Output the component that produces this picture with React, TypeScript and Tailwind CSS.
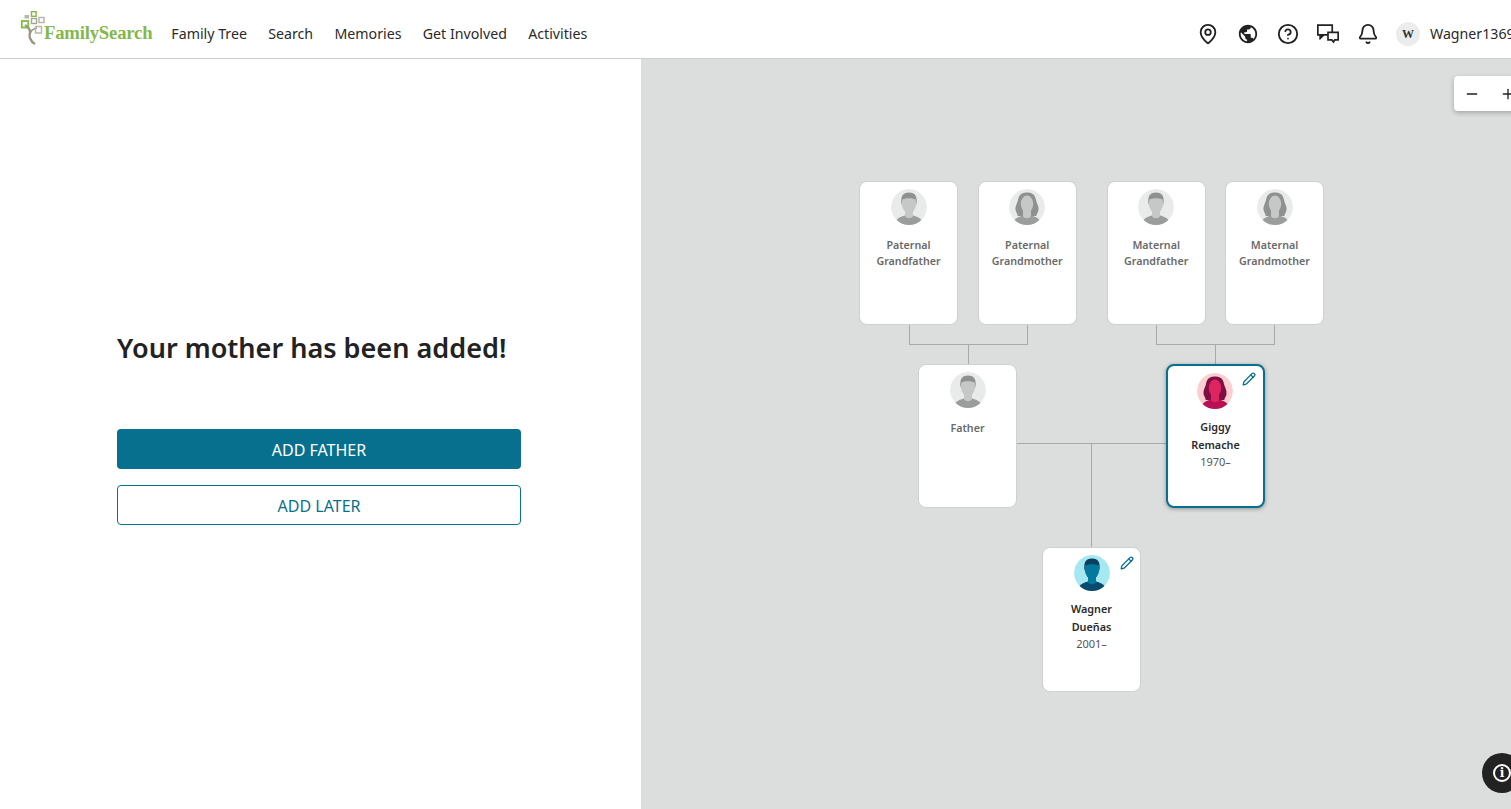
import { Bell, CircleHelp, MapPin, Minus, Pencil, Plus } from "lucide-react";
import { MdPublic } from "react-icons/md";

type Sex = "male" | "female";

const placeholders = [
  { pos: "left-[218px] top-[122px]", sex: "male", lines: ["Paternal", "Grandfather"] },
  { pos: "left-[336.7px] top-[122px]", sex: "female", lines: ["Paternal", "Grandmother"] },
  { pos: "left-[465.7px] top-[122px]", sex: "male", lines: ["Maternal", "Grandfather"] },
  { pos: "left-[584px] top-[122px]", sex: "female", lines: ["Maternal", "Grandmother"] },
  { pos: "left-[277px] top-[305px]", sex: "male", lines: ["Father"] },
] as const;

const connectors = [
  "left-[268px] top-[266px] h-[20px] w-px",
  "left-[386px] top-[266px] h-[20px] w-px",
  "left-[268px] top-[285px] h-px w-[119px]",
  "left-[327px] top-[285px] h-[20px] w-px",
  "left-[515px] top-[266px] h-[20px] w-px",
  "left-[633px] top-[266px] h-[20px] w-px",
  "left-[515px] top-[285px] h-px w-[119px]",
  "left-[574px] top-[285px] h-[20px] w-px",
  "left-[376px] top-[384px] h-px w-[149px]",
  "left-[450px] top-[384px] h-[104px] w-px",
];

function Logo() {
  return (
    <svg width="26" height="36" viewBox="0 0 26 36" fill="none" className="shrink-0">
      <path d="M15 33 C10 30 9 25 10 21 C10 18 8 16 5 14" stroke="#9b9686" strokeWidth="2.4" />
      <path d="M10 23 C11 19 13 18 17 17" stroke="#9b9686" strokeWidth="1.6" />
      <rect x="11.5" y="0.7" width="4.6" height="4.6" stroke="#84b847" strokeWidth="1.4" />
      <rect x="4.5" y="4" width="4.5" height="3.5" fill="#b9b7ad" />
      <rect x="11.5" y="7.5" width="5" height="5" stroke="#a5a297" strokeWidth="1.4" />
      <rect x="19" y="6.5" width="5" height="5" stroke="#b9b7ad" strokeWidth="1.5" />
      <rect x="1.8" y="10" width="6.5" height="6.5" stroke="#84b847" strokeWidth="1.8" />
      <rect x="15.5" y="15.5" width="6" height="6.5" stroke="#b9b7ad" strokeWidth="1.5" />
    </svg>
  );
}

function ChatIcon() {
  return (
    <svg width="26" height="24" viewBox="0 0 26 24" fill="none" stroke="#222" strokeWidth="2">
      <path d="M1 1.5 H18 V13 H8 L4 17 V13 H1 Z" fill="#fff" />
      <path d="M4 13 L4 16 L7 13 Z" fill="#222" />
      <path d="M13 10 H25 V19 H21 L19.5 21.5 L17.5 19 H13 Z" fill="#fff" />
    </svg>
  );
}

function Avatar({ sex, tone = "gray" }: { sex: Sex; tone?: "gray" | "blue" | "pink" }) {
  const palette = {
    gray: { bg: "#e9ebea", hair: "#8f9191", skin: "#c6c8c8", body: "#9b9d9d" },
    blue: { bg: "#a5e8f2", hair: "#0a3f5e", skin: "#05799c", body: "#0a4a6c" },
    pink: { bg: "#fbcfd0", hair: "#7e0f45", skin: "#e0245f", body: "#b90f55" },
  }[tone];
  return (
    <svg width="36" height="36" viewBox="0 0 36 36" className="block rounded-full">
      <circle cx="18" cy="18" r="18" fill={palette.bg} />
      {sex === "female" && (
        <path
          d="M18 3.5 C12 3 9.5 7 9 11 C8.5 14 6 17 6.5 20.5 C7 24 9 25 8.5 27 L27.5 27 C27 25 29.5 24 29.5 20.5 C30 17 27.5 14 27 11 C26.5 7 24 3 18 3.5 Z"
          fill={palette.hair}
        />
      )}
      <path d="M4 36 C4 30 8 28.5 13.5 26.5 H22.5 C28 28.5 32 30 32 36 Z" fill={palette.body} />
      <path d="M14 20 H22 V26.5 C22 30 14 30 14 26.5 Z" fill={palette.skin} />
      {sex === "male" ? (
        <ellipse cx="18" cy="14.5" rx="7.2" ry="9.5" fill={palette.skin} />
      ) : (
        <ellipse cx="18" cy="15" rx="6.2" ry="8.5" fill={palette.skin} />
      )}
      {sex === "male" && (
        <path
          d="M10.5 16 C9.5 7.5 11.5 3.5 18 3.5 C24.5 3.5 26.5 7.5 25.5 16 L24.5 10.5 C21 8.8 15 8.8 11.5 10.5 Z"
          fill={palette.hair}
        />
      )}
    </svg>
  );
}

function PersonCard({
  pos,
  name,
  years,
  sex,
  tone,
  selected,
}: {
  pos: string;
  name: string[];
  years: string;
  sex: Sex;
  tone: "blue" | "pink";
  selected?: boolean;
}) {
  return (
    <div
      className={`absolute ${pos} w-[99px] rounded-lg bg-white pt-[7px] text-center ${
        selected
          ? "h-[144px] border-2 border-[#07708f] shadow-[0_1px_4px_rgba(0,0,0,0.35)]"
          : "h-[145px] border border-[#cfd1d0]"
      }`}
    >
      <div className={`flex justify-center ${selected ? "pr-[2px]" : ""}`}>
        <Avatar sex={sex} tone={tone} />
      </div>
      <Pencil
        size={14}
        strokeWidth={2.2}
        className={`absolute text-[#07708f] ${selected ? "right-[7px] top-[6px]" : "right-[6px] top-[8px]"}`}
      />
      <div className="mt-[9px] text-[10.8px] font-semibold leading-[18px] text-[#2b2b2b]">
        {name.map((line) => (
          <div key={line}>{line}</div>
        ))}
      </div>
      <div className="text-[11px] leading-[16px] text-[#555]">{years}</div>
    </div>
  );
}

export default function App() {
  return (
    <div className="flex h-[809px] w-[1511px] flex-col overflow-hidden bg-white font-['Noto_Sans',sans-serif]">
      <header className="flex h-[59px] shrink-0 items-center border-b border-[#cdcfce] bg-white">
        <div className="flex w-[1197px] shrink-0 items-center pl-[20px]">
          <div className="flex items-end">
            <Logo />
            <span className="-ml-[2px] mb-[4px] font-['Liberation_Serif',serif] text-[18.7px] font-bold leading-[20px] tracking-[-0.2px] text-[#85b84a]">
              FamilySearch
            </span>
          </div>
          <nav className="ml-[19px] flex gap-[21.3px] pt-[10px] text-[14.2px] leading-[20px] text-[#2a2a2a]">
            <span>Family Tree</span>
            <span>Search</span>
            <span>Memories</span>
            <span>Get Involved</span>
            <span>Activities</span>
          </nav>
        </div>
        <div className="flex shrink-0 items-center pt-[9px] text-[#222]">
          <div className="flex w-[22px] justify-center">
            <MapPin size={22} strokeWidth={2} />
          </div>
          <div className="ml-[18px] flex w-[22px] justify-center">
            <MdPublic size={24} />
          </div>
          <div className="ml-[18px] flex w-[22px] justify-center">
            <CircleHelp size={22} strokeWidth={2} />
          </div>
          <div className="ml-[18px] flex w-[22px] justify-center">
            <ChatIcon />
          </div>
          <div className="ml-[18px] flex w-[22px] justify-center">
            <Bell size={22} strokeWidth={2} />
          </div>
          <div className="ml-[17px] flex h-[24px] w-[24px] items-center justify-center rounded-full bg-[#ebeded] font-['Liberation_Serif',serif] text-[12px] font-bold text-[#333]">
            W
          </div>
          <span className="ml-[10px] whitespace-nowrap text-[14.2px] leading-[20px] text-[#2a2a2a]">
            Wagner1369
          </span>
        </div>
      </header>

      <main className="flex min-h-0 flex-1">
        <section className="w-[641px] shrink-0 bg-white pl-[117px] pt-[268px]">
          <h1 className="text-[27.05px] font-semibold leading-[42px] text-[#222]">
            Your mother has been added!
          </h1>
          <div className="mt-[60px] flex w-[404px] flex-col gap-[16px]">
            <button className="h-[40px] rounded-[4px] bg-[#07708f] pt-[2px] text-[16px] text-white">
              ADD FATHER
            </button>
            <button className="h-[40px] rounded-[4px] border border-[#07708f] bg-white pt-[2px] text-[16px] text-[#07708f]">
              ADD LATER
            </button>
          </div>
        </section>

        <section className="relative flex-1 overflow-hidden bg-[#dcdedd]">
          {connectors.map((c) => (
            <div key={c} className={`absolute ${c} bg-[#a8aaaa]`} />
          ))}

          {placeholders.map((p) => (
            <div
              key={p.pos}
              className={`absolute ${p.pos} h-[144px] w-[99px] rounded-lg border border-[#cfd1d0] bg-white pt-[7px] text-center`}
            >
              <div className="flex justify-center">
                <Avatar sex={p.sex} />
              </div>
              <div className="mt-[12px] text-[10.7px] font-semibold leading-[16px] text-[#6a6a6a]">
                {p.lines.map((line) => (
                  <div key={line}>{line}</div>
                ))}
              </div>
            </div>
          ))}

          <PersonCard
            pos="left-[525px] top-[305px]"
            name={["Giggy", "Remache"]}
            years="1970–"
            sex="female"
            tone="pink"
            selected
          />
          <PersonCard
            pos="left-[401px] top-[488px]"
            name={["Wagner", "Dueñas"]}
            years="2001–"
            sex="male"
            tone="blue"
          />

          <div className="absolute left-[813px] top-[17px] flex h-[35px] w-[100px] items-center gap-[20px] rounded-[4px] bg-white pl-[10px] text-[#222] shadow-[0_2px_5px_rgba(0,0,0,0.25)]">
            <Minus size={16} strokeWidth={2} />
            <Plus size={16} strokeWidth={2} />
          </div>

          <div className="absolute left-[841px] top-[694px] flex h-[40px] w-[40px] items-center justify-center rounded-full bg-[#222]">
            <div className="flex h-[18px] w-[18px] items-center justify-center rounded-full border-2 border-white font-['DejaVu_Serif',serif] text-[12px] font-bold leading-none text-white">
              i
            </div>
          </div>
        </section>
      </main>
    </div>
  );
}
